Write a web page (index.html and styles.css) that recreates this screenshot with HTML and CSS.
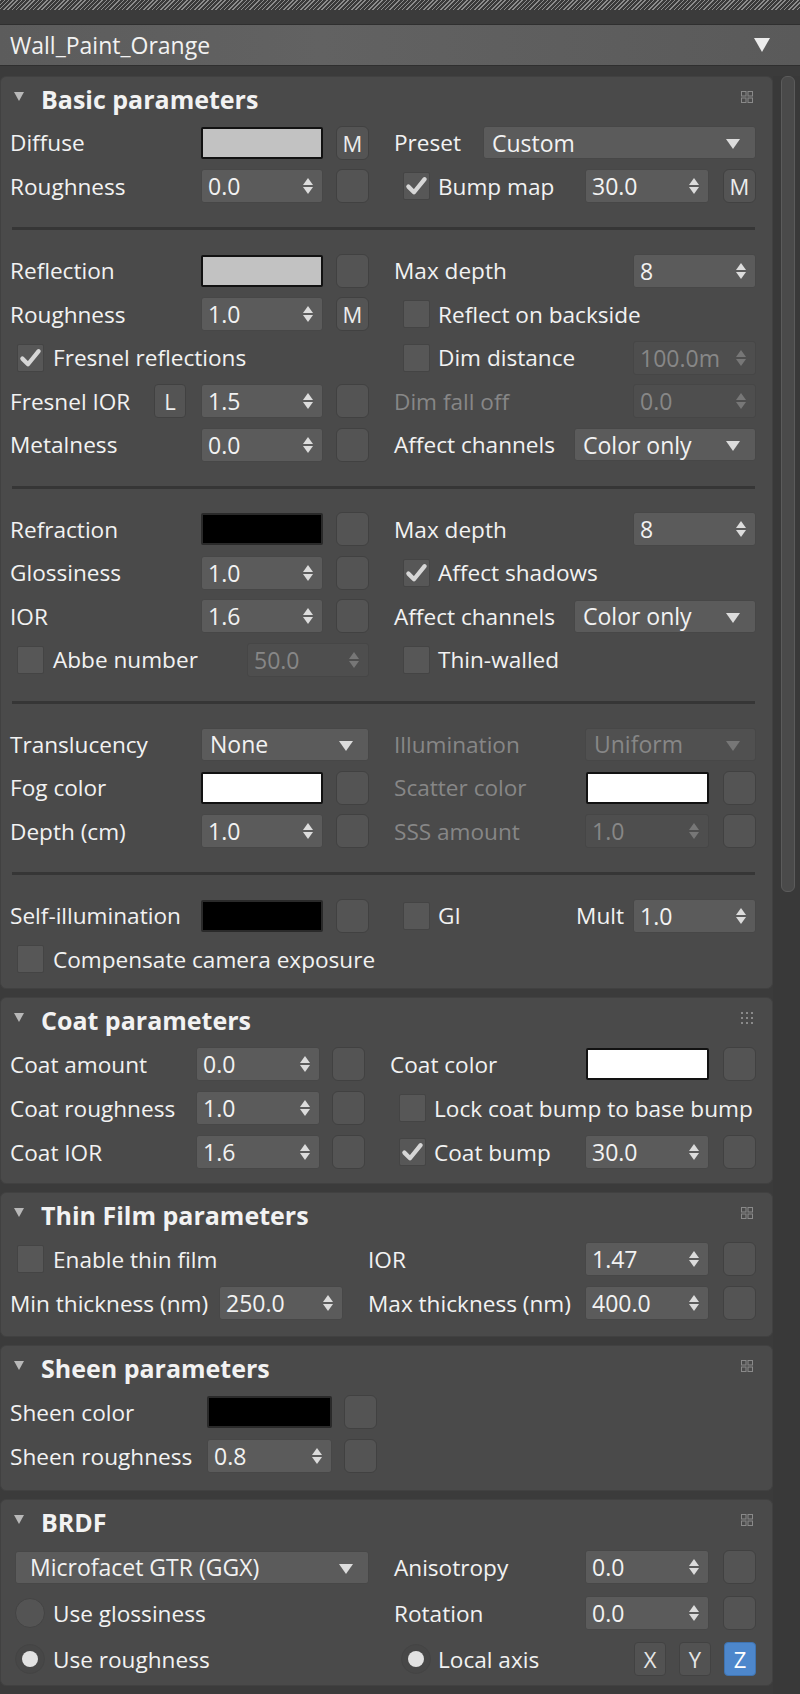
FILE: index.html
```html
<!DOCTYPE html>
<html>
  <head>
    <meta charset="utf-8" />
    <title>Wall_Paint_Orange</title>
    <link rel="stylesheet" href="styles.css">
  </head>
  <body>
    <div class="hatch"></div>
    <div class="namebar">
      <span class="mat">Wall_Paint_Orange</span>
      <span class="namedrop"></span>
    </div>

    <div class="main">
      <div class="panels">

        <!-- basic -->
        <section class="panel p-basic">
          <div class="phead">
            <span class="tri"></span><span class="ptitle">Basic parameters</span>
            <svg class="picon" width="12" height="12" viewBox="0 0 12 12"><rect x="0.5" y="0.5" width="4.5" height="4.5" fill="none" stroke="#8a8a8a"/><rect x="7" y="0.5" width="4.5" height="4.5" fill="none" stroke="#8a8a8a"/><rect x="0.5" y="7" width="4.5" height="4.5" fill="none" stroke="#8a8a8a"/><rect x="7" y="7" width="4.5" height="4.5" fill="none" stroke="#8a8a8a"/></svg>
          </div>
          <div class="row">
            <div class="half l"><span class="lbl">Diffuse</span><span class="swatch light"></span><span class="map">M</span></div>
            <div class="half r"><span class="lbl w86">Preset</span><span class="drop grow">Custom</span></div>
          </div>
          <div class="row">
            <div class="half l"><span class="lbl">Roughness</span><span class="spin">0.0</span><span class="map"></span></div>
            <div class="half r"><span class="check on"><svg viewBox="0 0 20 20"><path d="M3.5 10.5 L8 15 L16.5 4.5" /></svg></span><span class="lbl">Bump map</span><span class="spin w124">30.0</span><span class="map">M</span></div>
          </div>
          <div class="sep"></div>
          <div class="row">
            <div class="half l"><span class="lbl">Reflection</span><span class="swatch light"></span><span class="map"></span></div>
            <div class="half r"><span class="lbl">Max depth</span><span class="spin w123">8</span></div>
          </div>
          <div class="row">
            <div class="half l"><span class="lbl">Roughness</span><span class="spin">1.0</span><span class="map">M</span></div>
            <div class="half r"><span class="check"></span><span class="lbl">Reflect on backside</span></div>
          </div>
          <div class="row">
            <div class="half l"><span class="check on"><svg viewBox="0 0 20 20"><path d="M3.5 10.5 L8 15 L16.5 4.5" /></svg></span><span class="lbl">Fresnel reflections</span></div>
            <div class="half r"><span class="check"></span><span class="lbl">Dim distance</span><span class="spin w123 dis">100.0m</span></div>
          </div>
          <div class="row">
            <div class="half l"><span class="lbl">Fresnel IOR</span><span class="map small">L</span><span class="spin">1.5</span><span class="map"></span></div>
            <div class="half r"><span class="lbl dis">Dim fall off</span><span class="spin w123 dis">0.0</span></div>
          </div>
          <div class="row">
            <div class="half l"><span class="lbl">Metalness</span><span class="spin">0.0</span><span class="map"></span></div>
            <div class="half r"><span class="lbl">Affect channels</span><span class="drop w182">Color only</span></div>
          </div>
          <div class="sep"></div>
          <div class="row">
            <div class="half l"><span class="lbl">Refraction</span><span class="swatch black"></span><span class="map"></span></div>
            <div class="half r"><span class="lbl">Max depth</span><span class="spin w123">8</span></div>
          </div>
          <div class="row">
            <div class="half l"><span class="lbl">Glossiness</span><span class="spin">1.0</span><span class="map"></span></div>
            <div class="half r"><span class="check on"><svg viewBox="0 0 20 20"><path d="M3.5 10.5 L8 15 L16.5 4.5" /></svg></span><span class="lbl">Affect shadows</span></div>
          </div>
          <div class="row">
            <div class="half l"><span class="lbl">IOR</span><span class="spin">1.6</span><span class="map"></span></div>
            <div class="half r"><span class="lbl">Affect channels</span><span class="drop w182">Color only</span></div>
          </div>
          <div class="row">
            <div class="half l"><span class="check"></span><span class="lbl">Abbe number</span><span class="spin dis">50.0</span></div>
            <div class="half r"><span class="check"></span><span class="lbl">Thin-walled</span></div>
          </div>
          <div class="sep"></div>
          <div class="row">
            <div class="half l"><span class="lbl">Translucency</span><span class="drop w168">None</span></div>
            <div class="half r"><span class="lbl dis">Illumination</span><span class="drop w171 dis">Uniform</span></div>
          </div>
          <div class="row">
            <div class="half l"><span class="lbl">Fog color</span><span class="swatch white"></span><span class="map"></span></div>
            <div class="half r"><span class="lbl dis">Scatter color</span><span class="swatch white w123"></span><span class="map"></span></div>
          </div>
          <div class="row">
            <div class="half l"><span class="lbl">Depth (cm)</span><span class="spin">1.0</span><span class="map"></span></div>
            <div class="half r"><span class="lbl dis">SSS amount</span><span class="spin w124 dis">1.0</span><span class="map"></span></div>
          </div>
          <div class="sep"></div>
          <div class="row">
            <div class="half l"><span class="lbl">Self-illumination</span><span class="swatch black"></span><span class="map"></span></div>
            <div class="half r"><span class="check"></span><span class="lbl">GI</span><span class="lbl mult">Mult</span><span class="spin w123">1.0</span></div>
          </div>
          <div class="row">
            <div class="half l"><span class="check"></span><span class="lbl">Compensate camera exposure</span></div>
          </div>
        </section>

        <!-- coat -->
        <section class="panel p-coat">
          <div class="phead">
            <span class="tri"></span><span class="ptitle">Coat parameters</span>
            <svg class="picon" width="12" height="12" viewBox="0 0 12 12" fill="#8a8a8a"><rect x="0" y="0" width="2" height="2"/><rect x="5" y="0" width="2" height="2"/><rect x="10" y="0" width="2" height="2"/><rect x="0" y="5" width="2" height="2"/><rect x="5" y="5" width="2" height="2"/><rect x="10" y="5" width="2" height="2"/><rect x="0" y="10" width="2" height="2"/><rect x="5" y="10" width="2" height="2"/><rect x="10" y="10" width="2" height="2"/></svg>
          </div>
          <div class="row">
            <div class="half l"><span class="lbl">Coat amount</span><span class="spin w124">0.0</span><span class="map"></span></div>
            <div class="half r"><span class="lbl">Coat color</span><span class="swatch white w123"></span><span class="map"></span></div>
          </div>
          <div class="row">
            <div class="half l"><span class="lbl">Coat roughness</span><span class="spin w124">1.0</span><span class="map"></span></div>
            <div class="half r"><span class="check"></span><span class="lbl">Lock coat bump to base bump</span></div>
          </div>
          <div class="row">
            <div class="half l"><span class="lbl">Coat IOR</span><span class="spin w124">1.6</span><span class="map"></span></div>
            <div class="half r"><span class="check on"><svg viewBox="0 0 20 20"><path d="M3.5 10.5 L8 15 L16.5 4.5" /></svg></span><span class="lbl">Coat bump</span><span class="spin w124">30.0</span><span class="map"></span></div>
          </div>
        </section>

        <!-- thin film -->
        <section class="panel p-thin">
          <div class="phead">
            <span class="tri"></span><span class="ptitle">Thin Film parameters</span>
            <svg class="picon" width="12" height="12" viewBox="0 0 12 12"><rect x="0.5" y="0.5" width="4.5" height="4.5" fill="none" stroke="#8a8a8a"/><rect x="7" y="0.5" width="4.5" height="4.5" fill="none" stroke="#8a8a8a"/><rect x="0.5" y="7" width="4.5" height="4.5" fill="none" stroke="#8a8a8a"/><rect x="7" y="7" width="4.5" height="4.5" fill="none" stroke="#8a8a8a"/></svg>
          </div>
          <div class="row">
            <div class="half l"><span class="check"></span><span class="lbl">Enable thin film</span></div>
            <div class="half r"><span class="lbl">IOR</span><span class="spin w124">1.47</span><span class="map"></span></div>
          </div>
          <div class="row">
            <div class="half l"><span class="lbl">Min thickness (nm)</span><span class="spin w124">250.0</span></div>
            <div class="half r"><span class="lbl">Max thickness (nm)</span><span class="spin w124">400.0</span><span class="map"></span></div>
          </div>
        </section>

        <!-- sheen -->
        <section class="panel p-sheen">
          <div class="phead">
            <span class="tri"></span><span class="ptitle">Sheen parameters</span>
            <svg class="picon" width="12" height="12" viewBox="0 0 12 12"><rect x="0.5" y="0.5" width="4.5" height="4.5" fill="none" stroke="#8a8a8a"/><rect x="7" y="0.5" width="4.5" height="4.5" fill="none" stroke="#8a8a8a"/><rect x="0.5" y="7" width="4.5" height="4.5" fill="none" stroke="#8a8a8a"/><rect x="7" y="7" width="4.5" height="4.5" fill="none" stroke="#8a8a8a"/></svg>
          </div>
          <div class="row">
            <div class="half l"><span class="lbl">Sheen color</span><span class="swatch black w125"></span><span class="map"></span></div>
          </div>
          <div class="row">
            <div class="half l"><span class="lbl">Sheen roughness</span><span class="spin w125">0.8</span><span class="map"></span></div>
          </div>
        </section>

        <!-- brdf -->
        <section class="panel p-brdf">
          <div class="phead">
            <span class="tri"></span><span class="ptitle">BRDF</span>
            <svg class="picon" width="12" height="12" viewBox="0 0 12 12"><rect x="0.5" y="0.5" width="4.5" height="4.5" fill="none" stroke="#8a8a8a"/><rect x="7" y="0.5" width="4.5" height="4.5" fill="none" stroke="#8a8a8a"/><rect x="0.5" y="7" width="4.5" height="4.5" fill="none" stroke="#8a8a8a"/><rect x="7" y="7" width="4.5" height="4.5" fill="none" stroke="#8a8a8a"/></svg>
          </div>
          <div class="row">
            <div class="half l"><span class="drop grow first">Microfacet GTR (GGX)</span></div>
            <div class="half r"><span class="lbl">Anisotropy</span><span class="spin w124">0.0</span><span class="map"></span></div>
          </div>
          <div class="row">
            <div class="half l"><span class="radio"></span><span class="lbl">Use glossiness</span></div>
            <div class="half r"><span class="lbl">Rotation</span><span class="spin w124">0.0</span><span class="map"></span></div>
          </div>
          <div class="row">
            <div class="half l"><span class="radio on"></span><span class="lbl">Use roughness</span></div>
            <div class="half r">
              <span class="radio on"></span><span class="lbl">Local axis</span>
              <span class="axis">X</span><span class="axis">Y</span><span class="axis sel">Z</span>
            </div>
          </div>
        </section>

      </div>
      <div class="track"><div class="thumb"></div></div>
    </div>
  </body>
</html>
```

FILE: styles.css
```css
* {
  box-sizing: border-box;
}

html,
body {
  margin: 0;
  width: 800px;
  height: 1694px;
  overflow: hidden;
  background: #3b3b3b;
  color: #f2f2f2;
  font-family: "Open Sans", "Noto Sans", sans-serif;
  font-size: 23px;
}

.hatch {
  height: 10px;
  background: repeating-linear-gradient(135deg, #8c8c8c 0 1px, #3a3a3a 1px 3px);
}

.namebar {
  margin-top: 14px;
  height: 42px;
  display: flex;
  align-items: center;
  padding-left: 10px;
  background: linear-gradient(90deg, #5c5c5c, #626262 40%, #5a5a5a);
  border-top: 1px solid #2f2f2f;
  border-bottom: 1px solid #2f2f2f;
}
.mat {
  flex: 1;
}
.namedrop {
  width: 0;
  height: 0;
  margin-right: 30px;
  border-left: 8px solid transparent;
  border-right: 8px solid transparent;
  border-top: 14px solid #ececec;
}

.main {
  display: flex;
  margin-top: 10px;
}

.panels {
  width: 773px;
  display: flex;
  flex-direction: column;
  gap: 8px;
}

.panel {
  background: #4a4a4a;
  border: 1px solid #414141;
  border-radius: 6px;
  padding-bottom: 9px;
}
.p-basic {
  padding-bottom: 7px;
}
.p-thin {
  padding-bottom: 11px;
}
.p-sheen {
  padding-bottom: 12px;
}
.p-brdf {
  padding-bottom: 3px;
}

.phead {
  height: 44px;
  display: flex;
  align-items: center;
}
.tri {
  width: 0;
  height: 0;
  margin: 0 17px 6px 13px;
  border-left: 5px solid transparent;
  border-right: 5px solid transparent;
  border-top: 9px solid #b8b8b8;
}
.ptitle {
  flex: 1;
  font-size: 25px;
  font-weight: 700;
}
.picon {
  margin: 0 19px 4px 0;
}

.row {
  height: 43.5px;
  display: flex;
  align-items: center;
}
.p-coat .row,
.p-thin .row,
.p-sheen .row {
  height: 44px;
}
.p-brdf .row {
  height: 46px;
}

.half {
  display: flex;
  align-items: center;
  white-space: nowrap;
}
.half.l {
  width: 359px;
  margin-left: 9px;
}
.half.r {
  width: 362px;
  margin-left: 25px;
}
.p-coat .half.l {
  width: 355px;
}
.p-coat .half.r {
  width: 366px;
}
.p-thin .half.l {
  width: 333px;
}
.p-thin .half.r {
  width: 388px;
}
.p-sheen .half.l {
  width: 367px;
}

.lbl {
  flex: 1;
  font-size: 22.6px;
}
.lbl.w86 {
  flex: 0 0 89px;
}
.lbl.dis,
.dis {
  color: #878787;
}
.lbl.mult {
  flex: 0 0 auto;
  margin-right: 9px;
}

.sep {
  height: 3px;
  margin: 19px 17px 19px 11px;
  background: #363636;
}

/* controls */
.spin,
.drop {
  position: relative;
  flex: 0 0 122px;
  height: 34px;
  display: flex;
  align-items: center;
  padding-left: 6px;
  background: #5b5b5b;
  border: 1px solid #474747;
  border-radius: 3px;
}
.spin::before,
.spin::after {
  content: "";
  position: absolute;
  right: 9px;
  border-left: 5px solid transparent;
  border-right: 5px solid transparent;
}
.spin::before {
  top: 8px;
  border-bottom: 7px solid #dcdcdc;
}
.spin::after {
  bottom: 8px;
  border-top: 7px solid #dcdcdc;
}
.spin.dis {
  background: #4e4e4e;
  border-color: #464646;
  margin-left: auto;
}
.spin.dis::before {
  border-bottom-color: #777;
}
.spin.dis::after {
  border-top-color: #777;
}

.drop {
  height: 33px;
  padding-left: 8px;
}
.drop::after {
  content: "";
  position: absolute;
  right: 15px;
  top: 12px;
  border-left: 7px solid transparent;
  border-right: 7px solid transparent;
  border-top: 10px solid #dcdcdc;
}
.drop.dis {
  background: #505050;
}
.drop.dis::after {
  border-top-color: #777;
}
.drop.grow {
  flex: 1;
}
.drop.first {
  margin-left: 5px;
  padding-left: 14px;
}

.w123 {
  flex-basis: 123px !important;
}
.w124 {
  flex-basis: 124px !important;
}
.w125 {
  flex-basis: 125px !important;
}
.w168 {
  flex-basis: 168px !important;
}
.w171 {
  flex-basis: 171px !important;
}
.w182 {
  flex-basis: 182px !important;
}

.swatch {
  flex: 0 0 122px;
  height: 32px;
  border: 2px solid #121212;
  border-radius: 2px;
}
.swatch.light {
  background: #c2c2c2;
}
.swatch.black {
  background: #000;
  border-color: #2a2a2a;
}
.swatch.white {
  background: #fff;
}

.map {
  flex: 0 0 33px;
  height: 34px;
  margin-left: 13px;
  display: flex;
  align-items: center;
  justify-content: center;
  background: #545454;
  border: 1px solid #414141;
  border-radius: 6px;
  color: #ececec;
  font-size: 22px;
}
.half.r .map {
  margin-left: 14px;
}
.p-coat .half.l .map,
.p-sheen .map {
  margin-left: 12px;
}
.map.small {
  flex-basis: 32px;
  margin: 0 15px 0 0;
  border-radius: 4px;
}

.check {
  flex: 0 0 27px;
  height: 28px;
  margin: 0 9px 0 7px;
  background: #575757;
  border: 1px solid #444;
  border-radius: 2px;
}
.half.r .check {
  margin: 0 8px 0 9px;
}
.check svg {
  display: block;
  width: 100%;
  height: 100%;
}
.check svg path {
  fill: none;
  stroke: #d6d6d6;
  stroke-width: 3.4;
  stroke-linecap: round;
  stroke-linejoin: round;
}

.radio {
  position: relative;
  flex: 0 0 30px;
  height: 30px;
  margin: 0 8px 0 5px;
  background: #545454;
  border: 1px solid #444;
  border-radius: 50%;
}
.half.r .radio {
  margin: 0 7px 0 7px;
}
.radio.on {
  background: #474747;
}
.radio.on::after {
  content: "";
  position: absolute;
  left: 6px;
  top: 6px;
  width: 16px;
  height: 16px;
  border-radius: 50%;
  background: #e2e2e2;
}

.axis {
  flex: 0 0 32px;
  height: 34px;
  margin-left: 13px;
  display: flex;
  align-items: center;
  justify-content: center;
  background: #525252;
  border: 1px solid #424242;
  border-radius: 4px;
  color: #e6e6e6;
  font-size: 22px;
}
.axis.sel {
  background: #4d87cc;
  border-color: #3f73b0;
  color: #fff;
}

/* scroll */
.track {
  width: 27px;
  background: #393939;
  height: 1618px;
}
.thumb {
  margin-left: 8px;
  width: 14px;
  height: 816px;
  background: #4a4a4a;
  border: 1px solid #5b5b5b;
  border-radius: 6px;
}
```
